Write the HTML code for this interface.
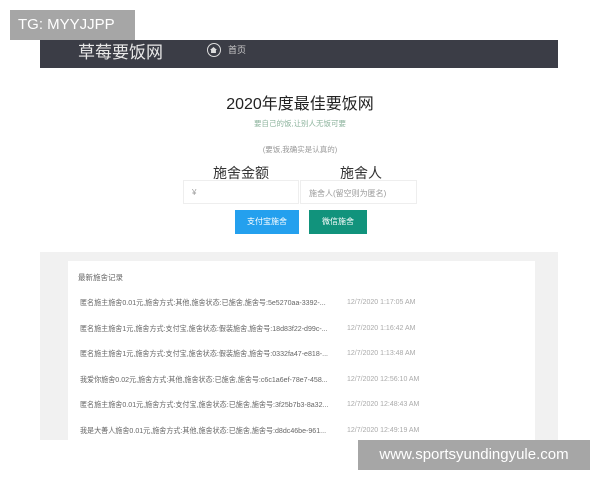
<!DOCTYPE html>
<html><head><meta charset="utf-8"><style>
*{margin:0;padding:0;box-sizing:border-box}
body{width:600px;height:480px;background:#fff;position:relative;overflow:hidden;font-family:"Liberation Sans","Noto Sans CJK SC",sans-serif}
.a{position:absolute}
</style></head><body>
<div class="a" style="left:40px;top:40px;width:518px;height:28px;background:#3b3d46"></div>
<div class="a" style="left:78px;top:38px;font-size:17px;color:#e8e8e8">草莓要饭网</div>
<div class="a" style="left:207px;top:43px;width:14px;height:14px;border-radius:50%;border:1.5px solid #ddd;background:#3b3d46"><div style="position:absolute;left:2px;top:3px;width:7px;height:6px;background:#ddd;clip-path:polygon(50% 0,100% 50%,85% 50%,85% 100%,15% 100%,15% 50%,0 50%)"></div></div>
<div class="a" style="left:228px;top:43px;font-size:9px;color:#ccc">首页</div>
<div class="a" style="left:10px;top:10px;width:125px;height:30px;background:#a6a6a6;color:#fff;font-size:15px;line-height:30px;padding-left:8px">TG: MYYJJPP</div>
<div class="a" style="left:0;width:600px;top:90px;text-align:center;font-size:16px;color:#222">2020年度最佳要饭网</div>
<div class="a" style="left:0;width:600px;top:118px;text-align:center;font-size:7.5px;color:#8fb59f">要自己的饭,让别人无饭可要</div>
<div class="a" style="left:0;width:600px;top:144px;text-align:center;font-size:7.5px;color:#999">(要饭,我确实是认真的)</div>
<div class="a" style="left:213px;top:163px;font-size:14px;color:#333">施舍金额</div>
<div class="a" style="left:340px;top:163px;font-size:14px;color:#333">施舍人</div>
<div class="a" style="left:183px;top:180px;width:116px;height:24px;border:1px solid #eee;font-size:8px;color:#999;padding:7px 8px">¥</div>
<div class="a" style="left:300px;top:180px;width:117px;height:24px;border:1px solid #eee;font-size:8px;color:#999;padding:7px 8px">施舍人(留空则为匿名)</div>
<div class="a" style="left:235px;top:210px;width:64px;height:24px;background:#24a0ee;color:#fff;font-size:8px;text-align:center;line-height:24px">支付宝施舍</div>
<div class="a" style="left:309px;top:210px;width:58px;height:24px;background:#11937c;color:#fff;font-size:8px;text-align:center;line-height:24px">微信施舍</div>
<div class="a" style="left:40px;top:252px;width:518px;height:188px;background:#f1f1f1"></div>
<div class="a" style="left:68px;top:261px;width:467px;height:179px;background:#fff"></div>
<div class="a" style="left:78px;top:272px;font-size:7.5px;color:#666">最新施舍记录</div>
<div class="a" style="left:80px;top:290px;font-size:7.6px;color:#666;line-height:25.5px;white-space:nowrap;transform:scaleX(0.93);transform-origin:0 0">
匿名施主施舍0.01元,施舍方式:其他,施舍状态:已施舍,施舍号:5e5270aa-3392-...<br>
匿名施主施舍1元,施舍方式:支付宝,施舍状态:假装施舍,施舍号:18d83f22-d99c-...<br>
匿名施主施舍1元,施舍方式:支付宝,施舍状态:假装施舍,施舍号:0332fa47-e818-...<br>
我爱你施舍0.02元,施舍方式:其他,施舍状态:已施舍,施舍号:c6c1a6ef-78e7-458...<br>
匿名施主施舍0.01元,施舍方式:支付宝,施舍状态:已施舍,施舍号:3f25b7b3-8a32...<br>
我是大善人施舍0.01元,施舍方式:其他,施舍状态:已施舍,施舍号:d8dc46be-961...</div>
<div class="a" style="left:347px;top:290px;font-size:7px;color:#aaa;line-height:25.5px;white-space:nowrap">
12/7/2020 1:17:05 AM<br>12/7/2020 1:16:42 AM<br>12/7/2020 1:13:48 AM<br>12/7/2020 12:56:10 AM<br>12/7/2020 12:48:43 AM<br>12/7/2020 12:49:19 AM</div>
<div class="a" style="left:358px;top:440px;width:232px;height:30px;background:#a6a6a6;color:#fff;font-size:15px;line-height:30px;text-align:center">www.sportsyundingyule.com</div>
</body></html>
